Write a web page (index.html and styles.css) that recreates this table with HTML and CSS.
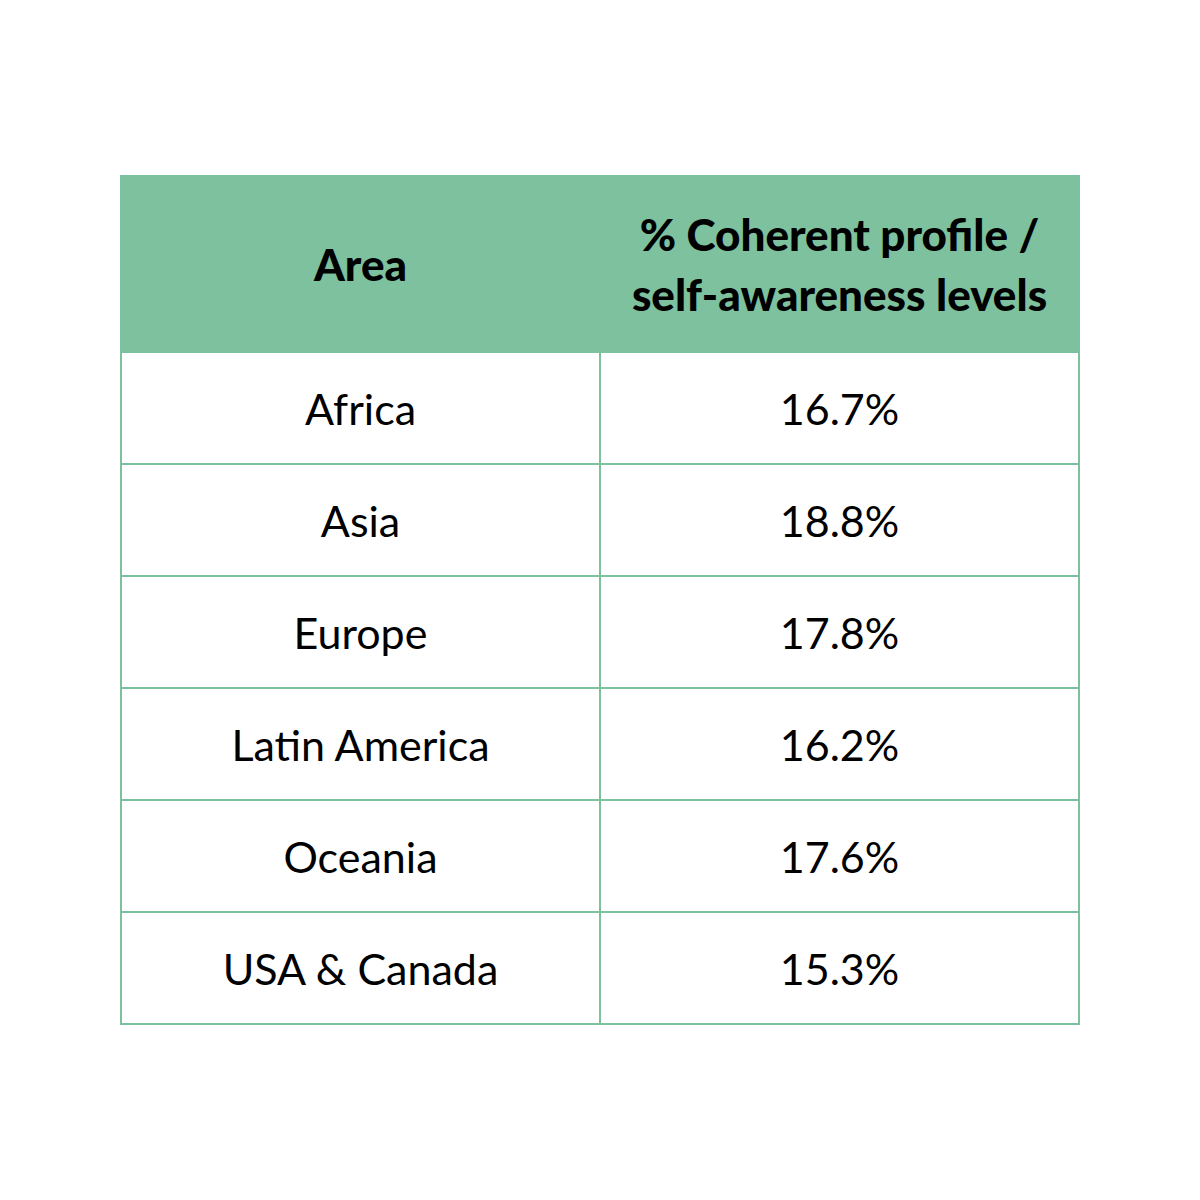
FILE: index.html
```html
<!DOCTYPE html>
<html lang="en">
<head>
    <meta charset="UTF-8">
    <meta name="viewport" content="width=device-width, initial-scale=1.0">
    <title>Coherent profile by area</title>
  <link rel="stylesheet" href="styles.css">
</head>
<body>
    <div class="wrap">
        <table class="areaTable">
            <tr class="headRow">
                <th>Area</th>
                <th>% Coherent profile /<br>self-awareness levels</th>
            </tr>
            <tr><td>Africa</td><td>16.7%</td></tr>
            <tr><td>Asia</td><td>18.8%</td></tr>
            <tr><td>Europe</td><td>17.8%</td></tr>
            <tr><td>Latin America</td><td>16.2%</td></tr>
            <tr><td>Oceania</td><td>17.6%</td></tr>
            <tr><td>USA &amp; Canada</td><td>15.3%</td></tr>
        </table>
    </div>
</body>
</html>
```

FILE: styles.css
```css
body{
    margin: 0;
    padding: 0;
    background-color: #fff;
    font-family: Lato, "Noto Sans", sans-serif;
    color: #000;
}
.wrap{
    padding-top: 175px;
    display: flex;
    justify-content: center;
}
.areaTable{
    width: 960px;
    border-collapse: collapse;
    table-layout: fixed;
}
.areaTable th, .areaTable td{
    border: 2px solid #7dc19e;
    text-align: center;
    vertical-align: middle;
    padding: 0;
    font-size: 43px;
}
.areaTable th{
    background-color: #7dc19e;
    font-weight: 900;
    font-size: 44px;
    height: 174px;
    line-height: 60px;
}
.areaTable td{
    height: 110px;
    font-weight: normal;
}
```
